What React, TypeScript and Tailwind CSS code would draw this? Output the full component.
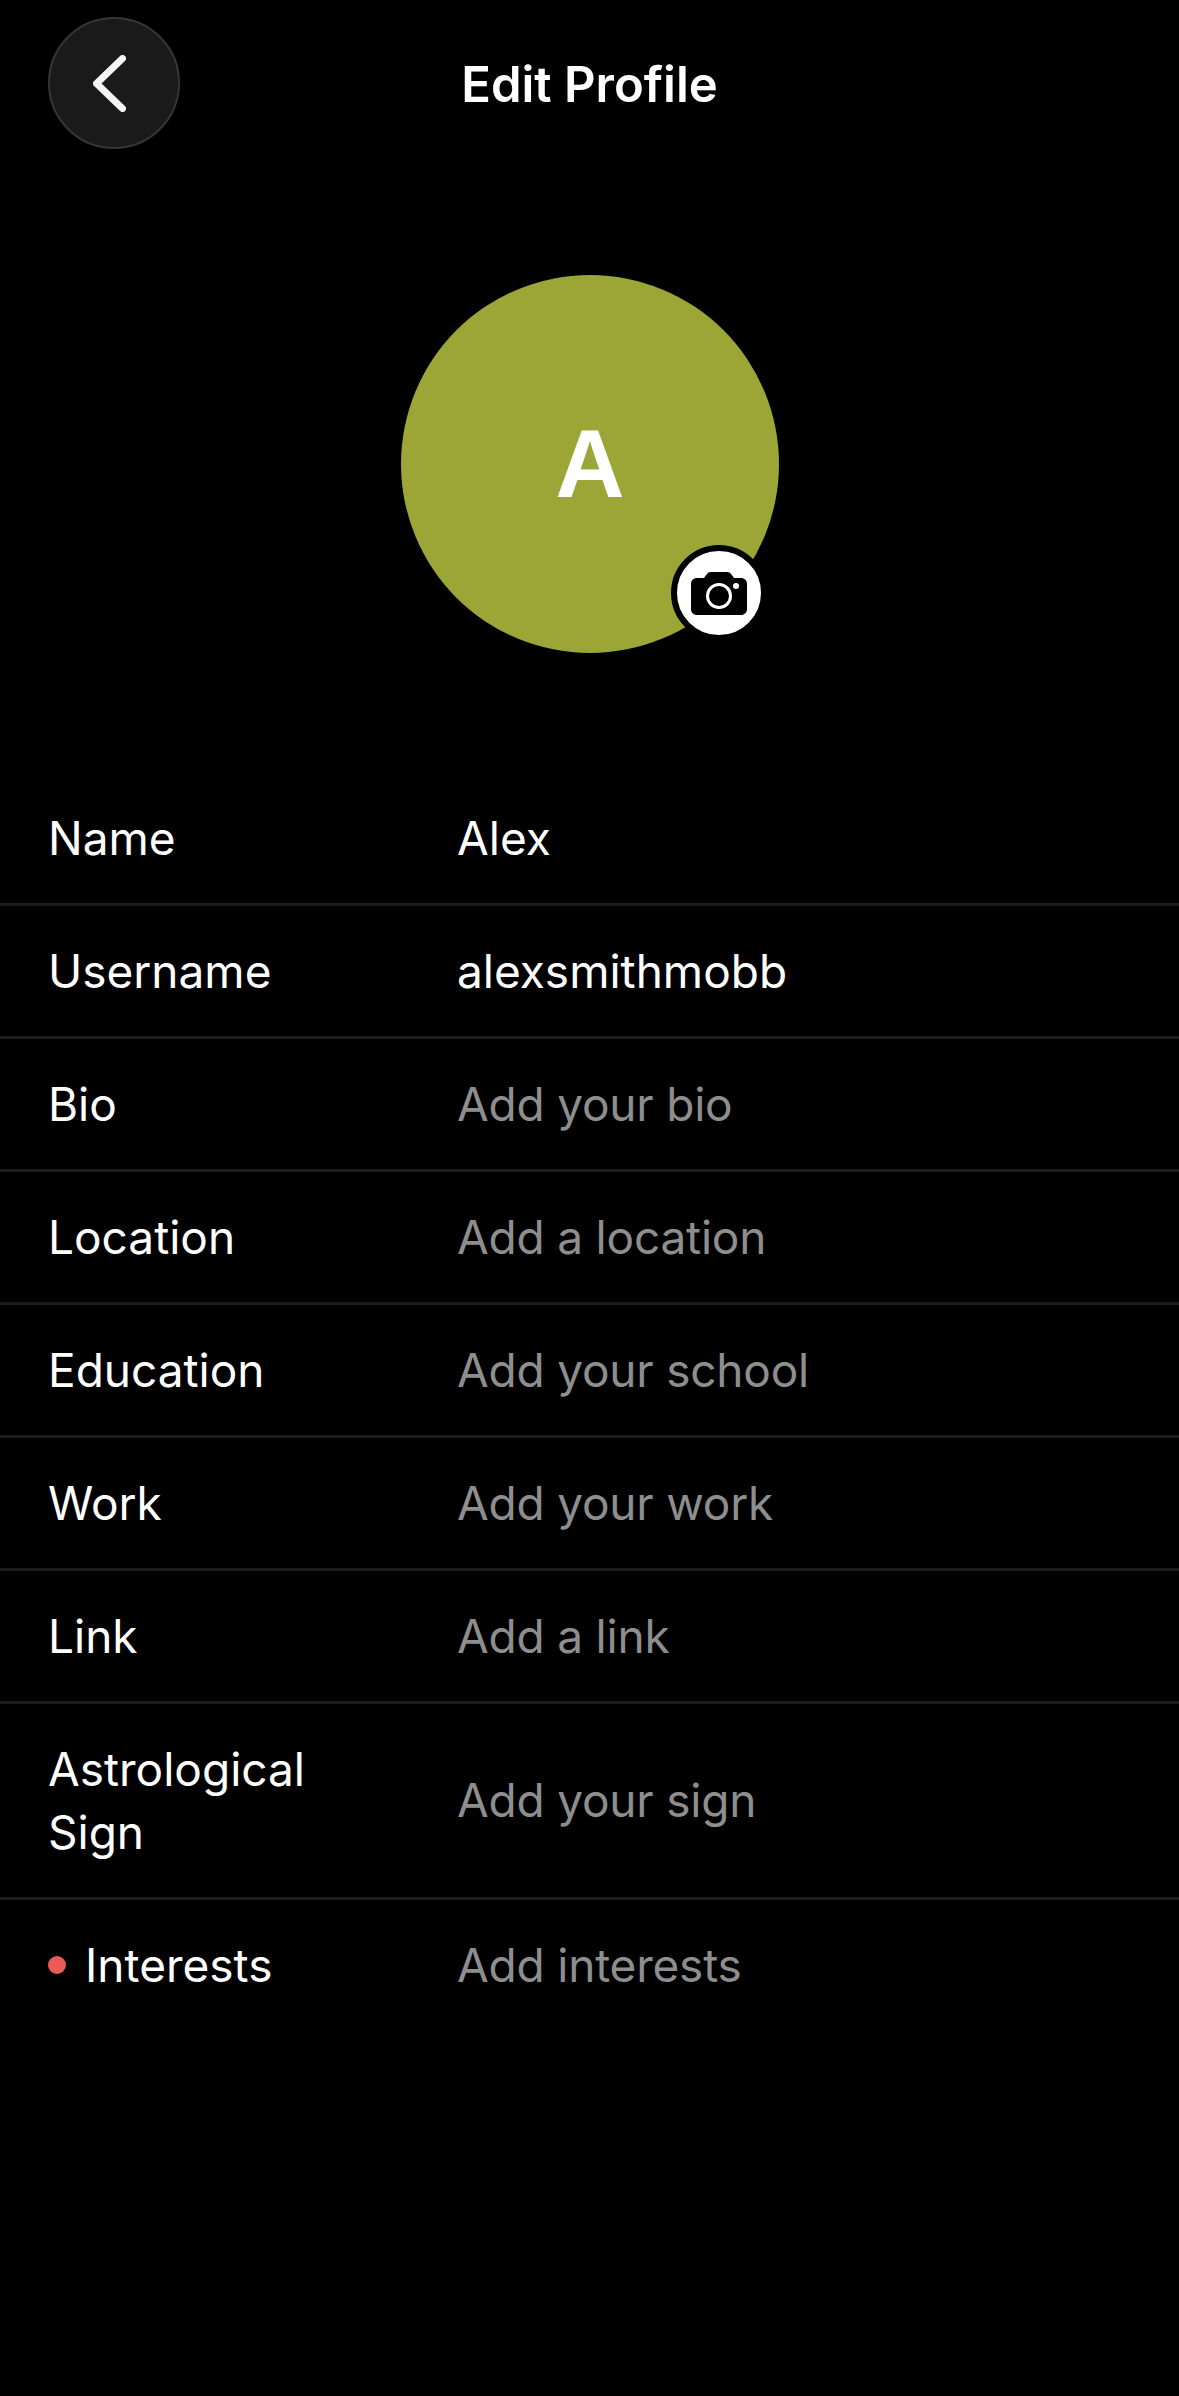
const rows = [
  { label: "Name", value: "Alex", filled: true },
  { label: "Username", value: "alexsmithmobb", filled: true },
  { label: "Bio", value: "Add your bio" },
  { label: "Location", value: "Add a location" },
  { label: "Education", value: "Add your school" },
  { label: "Work", value: "Add your work" },
  { label: "Link", value: "Add a link" },
];

function Row({
  label,
  value,
  filled,
  dot,
  last,
  tall,
}: {
  label: string;
  value: string;
  filled?: boolean;
  dot?: boolean;
  last?: boolean;
  tall?: boolean;
}) {
  return (
    <div
      className={`flex items-center pl-[48px] ${tall ? "h-[196px]" : last ? "h-[130px]" : "h-[133px]"} ${
        last ? "" : "border-b-[3px] border-[#1c1c1c]"
      }`}
    >
      <div className="w-[409px] flex items-center shrink-0">
        {dot && <span className="w-[18px] h-[18px] rounded-full bg-[#ec5a58] mr-[19px]" />}
        <span className={tall ? "w-[300px] leading-[63px]" : ""}>{label}</span>
      </div>
      <span className={filled ? "text-white" : "text-[#8e8e8e] tracking-[-0.2px]"}>{value}</span>
    </div>
  );
}

export default function App() {
  return (
    <div className="w-[1179px] h-[2396px] bg-black text-white font-[Inter,sans-serif] text-[46px] overflow-hidden">
      <header className="relative flex items-center pt-[17px] pl-[48px]">
        <button className="w-[132px] h-[132px] rounded-full bg-[#1a1a1a] border-2 border-[#363636] flex items-center justify-center">
          <svg className="mr-[9px]" width="33" height="57" viewBox="0 0 33 57" fill="none">
            <path
              d="M29.500 3.500 L3.500 28.500 L29.500 53.500"
              stroke="#f5f5f5"
              strokeWidth="7"
              strokeLinecap="round"
              strokeLinejoin="round"
            />
          </svg>
        </button>
        <h1 className="absolute left-0 right-0 top-[19px] h-[132px] flex items-center justify-center text-[49px] font-semibold">
          Edit Profile
        </h1>
      </header>

      <div className="flex justify-center pl-[1px] mt-[126px]">
        <div className="relative w-[378px] h-[378px] rounded-full bg-[#9ca636] flex items-center justify-center">
          <span className="font-['Liberation_Sans',sans-serif] font-bold text-[96px] leading-none">A</span>
          <div className="absolute left-[270px] top-[270px] w-[96px] h-[96px] rounded-full bg-white border-[6px] border-black flex items-center justify-center">
            <svg width="56" height="43" viewBox="0 0 56 43">
              <path
                fill="#000"
                d="M6 6h7l2.500-3.500C16.800.8 18 0 20 0h16c2 0 3.200.8 4.500 2.500L43 6h7c3.500 0 6 2.500 6 6v25c0 3.500-2.500 6-6 6H6c-3.500 0-6-2.500-6-6V12c0-3.500 2.500-6 6-6Z"
              />
              <circle cx="28" cy="24" r="11.500" fill="none" stroke="#fff" strokeWidth="3" />
              <circle cx="45" cy="14" r="3" fill="#fff" />
            </svg>
          </div>
        </div>
      </div>

      <div className="mt-[120px]">
        {rows.map((r) => (
          <Row key={r.label} {...r} />
        ))}
        <Row label="Astrological Sign" value="Add your sign" tall />
        <Row label="Interests" value="Add interests" dot last />
      </div>
    </div>
  );
}
